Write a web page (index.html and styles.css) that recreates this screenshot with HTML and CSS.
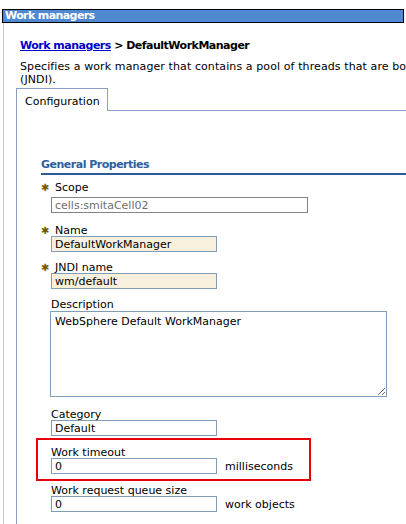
FILE: index.html
```html
<!DOCTYPE html>
<html lang="en">

<head>
  <meta charset="UTF-8" />
  <title>Work managers</title>
  <link rel="stylesheet" href="styles.css">
</head>

<body>
  <div class="titlebar">Work managers</div>

  <div class="page">
    <div class="crumb"><a href="#">Work managers</a> &gt; DefaultWorkManager</div>
    <p class="intro">Specifies a work manager that contains a pool of threads that are bound into Java Naming and Directory Interface<br>(JNDI).</p>

    <div class="tabs">
      <div class="tab">Configuration</div>
      <div class="tab-rest"></div>
    </div>

    <div class="panel">
      <h2 class="section">General Properties</h2>

      <div class="fields">
        <div class="field first">
          <label class="label"><span class="req">&#10033;</span>Scope</label>
          <input class="input wide scope" type="text" value="cells:smitaCell02" readonly>
        </div>

        <div class="field">
          <label class="label"><span class="req">&#10033;</span>Name</label>
          <input class="input required" type="text" value="DefaultWorkManager">
        </div>

        <div class="field">
          <label class="label"><span class="req">&#10033;</span>JNDI name</label>
          <input class="input required" type="text" value="wm/default">
        </div>

        <div class="field spaced">
          <label class="label">Description</label>
          <textarea class="textarea">WebSphere Default WorkManager</textarea>
        </div>

        <div class="field tight">
          <label class="label">Category</label>
          <input class="input" type="text" value="Default">
        </div>

        <div class="highlight">
          <label class="label">Work timeout</label>
          <div class="row">
            <input class="input" type="text" value="0">
            <span class="unit">milliseconds</span>
          </div>
        </div>

        <div class="field">
          <label class="label">Work request queue size</label>
          <div class="row">
            <input class="input" type="text" value="0">
            <span class="unit">work objects</span>
          </div>
        </div>
      </div>
    </div>
  </div>
</body>

</html>
```

FILE: styles.css
```css
* {
  box-sizing: border-box;
}

body {
  margin: 0;
  background: #ffffff;
  color: #000000;
  font-family: 'DejaVu Sans', Verdana, sans-serif;
  font-size: 11px;
  overflow: hidden;
}

.titlebar {
  margin: 9px 2px 0 2px;
  height: 14px;
  border: 1px solid #000000;
  background: #4f89d2;
  color: #ffffff;
  font-weight: bold;
  letter-spacing: -0.6px;
  line-height: 12px;
  padding-left: 2px;
  white-space: nowrap;
}

.page {
  margin-left: 3px;
  border-left: 1px solid #c8c8c8;
  padding: 16px 0 0 12px;
  white-space: nowrap;
  overflow: hidden;
}

.crumb {
  margin-left: 4px;
  font-weight: bold;
  letter-spacing: -0.5px;
  line-height: 14px;
}

.crumb a {
  color: #0000cc;
}

.intro {
  margin: 7px 0 0 4px;
  line-height: 13px;
  letter-spacing: 0.1px;
}

/* tab strip */
.tabs {
  display: flex;
  margin-top: 2px;
}

.tab {
  width: 92px;
  height: 23px;
  border: 1px solid #8b9dc6;
  border-bottom: none;
  padding: 6px 0 0 8px;
}

.tab-rest {
  flex: 1;
  border-bottom: 1px solid #8b9dc6;
}

.panel {
  border-left: 1px solid #8b9dc6;
  padding: 47px 0 0 24px;
  height: 420px;
}

.section {
  margin: 0;
  font-size: 11px;
  font-weight: bold;
  letter-spacing: -0.5px;
  color: #2f5e9e;
  line-height: 13px;
  border-bottom: 2px solid #2c5b96;
  padding-bottom: 2px;
}

.fields {
  padding: 5px 0 0 10px;
}

.field {
  margin-bottom: 8px;
}

.field.first {
  margin-bottom: 10px;
}

.field.spaced {
  margin-bottom: 10px;
}

.field.tight {
  margin-bottom: 2px;
}

.label {
  display: block;
  height: 13px;
  line-height: 16px;
}

.req {
  display: inline-block;
  width: 14px;
  margin-left: -10px;
  color: #6e5c08;
  font-size: 10px;
}

.input {
  display: block;
  width: 166px;
  height: 16px;
  margin: 0;
  padding: 0 0 0 3px;
  border: 1px solid #7f9db9;
  background: #ffffff;
  font-family: 'DejaVu Sans', Verdana, sans-serif;
  font-size: 11px;
  color: #000000;
}

.input.wide {
  width: 257px;
}

.input.scope {
  margin-top: 4px;
  border-color: #848484;
  color: #6e6e6e;
}

.input.required {
  background: #f8efdc;
}

.textarea {
  display: block;
  width: 337px;
  height: 86px;
  margin: 1px 0 0 -1px;
  padding: 3px 4px;
  border: 1px solid #7f9db9;
  font-family: 'DejaVu Sans', Verdana, sans-serif;
  font-size: 11px;
  resize: both;
}

.row {
  display: flex;
  align-items: center;
}

.unit {
  margin-left: 8px;
}

/* emphasis frame around the timeout field */
.highlight {
  width: 275px;
  margin: 0 0 2px -15px;
  padding: 5px 0 5px 13px;
  border: 2px solid #e8000b;
}
```
